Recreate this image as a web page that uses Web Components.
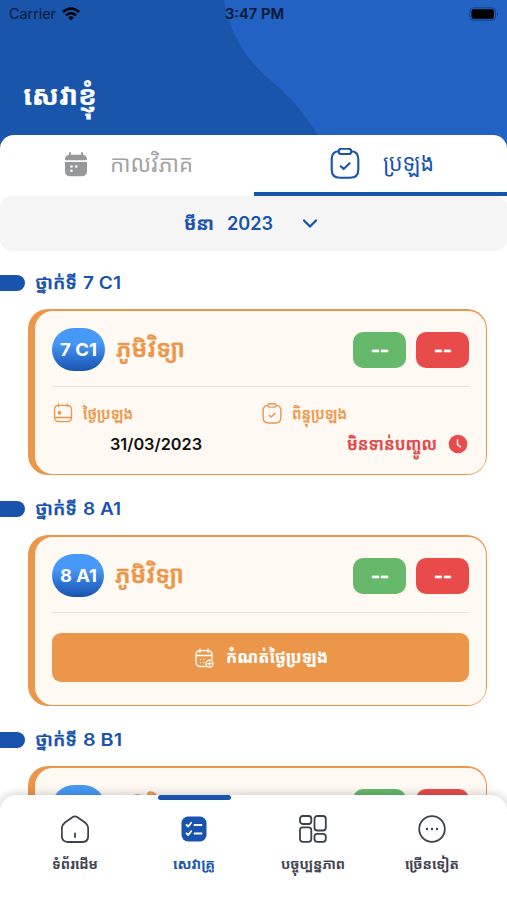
<!DOCTYPE html>
<html lang="km">
<head>
<meta charset="utf-8">
<title>សេវាខ្ញុំ</title>
<style>
html,body{margin:0;padding:0;height:100%;overflow:hidden;background:#fff}
body{font-family:Inter,"Noto Sans Khmer","Khmer OS","Noto Sans",sans-serif}
</style>
</head>
<body>
<service-app></service-app>
<script>
const ICONS = {
  calFill: '<path d="M7 2v3M19 2v3" stroke="#97989a" stroke-width="1.800"/><g fill="#97989a" stroke="none"><path d="M2 9.200V8.500q0-4.800 5-4.800h12q5 0 5 4.800v.7zM2 11h22V20q0 5.200-5 5.200H7q-5 0-5-5.200z"/></g><g fill="#fff" stroke="none"><circle cx="8.500" cy="15.500" r="1.300"/><circle cx="13.300" cy="15.500" r="1.300"/><circle cx="8.500" cy="19.800" r="1.300"/></g>',
  clip: '<path d="M8.500 3.300C4 3.700 1.700 6 1.700 11v10.500q0 8.300 8.300 8.300h10q8.300 0 8.300-8.300V11c0-5-2.300-7.300-6.800-7.700M11.300 6h7.400q2.600 0 2.600-2.600T18.700.8h-7.400Q8.700.8 8.700 3.400T11.300 6zM10.800 18.200l2.800 2.700 6-5.600"/>',
  calOut: '<path d="M5.500 1v2.600M14.500 1v2.600M6 2.300h8q4.500 0 4.500 4.500v7.400q0 4.500-4.500 4.500H6q-4.500 0-4.500-4.500V6.800Q1.500 2.300 6 2.300zM2 14.500h16"/><circle cx="6.500" cy="9.800" r="1.200" fill="currentColor"/>',
  clock: '<circle cx="10" cy="10" r="9.300" fill="#e94b4b" stroke="none"/><path d="M9.500 5.800v4.700l2.900 2.300" stroke="#fff"/>',
  calAdd: '<path d="M6 1v3.500M14 1v3.500M2 7.500h16M18 11V7q0-4.300-4.200-4.300H6.200Q2 2.700 2 7v7q0 4.500 4.200 4.500h5.300"/><circle cx="15.500" cy="15.700" r="3.500"/><path d="M15.500 14.200v3M14 15.700h3M6.500 11.500h.1M9.800 11.500h.1M6.500 14.500h.1M9.800 14.500h.1"/>',
  chev: '<path d="M2 2.500l6 6 6-6"/>',
  home: '<path d="M4 7.500L11.500 2.200q2.500-1.600 5 0L24 7.500q3.200 2.500 3.200 6v7.300q0 6.200-6.200 6.200H7q-6.200 0-6.200-6.200v-7.300q0-3.500 3.200-6zM14 18.500v3.500"/>',
  list: '<rect x="1.500" y="1.500" width="25" height="25" rx="6.500" fill="#1854ad" stroke="none"/><path d="M6.500 9.800l1.700 1.700 3-3.700M14.500 10h7M6.500 18.300L8.200 20l3-3.700M14.500 18.500h7" stroke="#fff"/>',
  grid: '<rect x="1" y="1" width="11.300" height="8" rx="2.700"/><rect x="15.500" y="1" width="11.300" height="14.500" rx="2.700"/><rect x="1" y="12.300" width="11.300" height="14.500" rx="2.700"/><rect x="15.500" y="18.800" width="11.300" height="8" rx="2.700"/>',
  more: '<circle cx="14" cy="14" r="12.800"/><g fill="currentColor" stroke="none"><circle cx="9" cy="14" r="1.200"/><circle cx="14" cy="14" r="1.200"/><circle cx="19" cy="14" r="1.200"/></g>'
};
class UiIcon extends HTMLElement {
  connectedCallback() {
    const w = this.getAttribute('w'), h = this.getAttribute('h') || w;
    const box = this.getAttribute('box') || `${w} ${h}`;
    this.attachShadow({mode:'open'}).innerHTML =
      `<style>:host{display:block;flex:none;width:${w}px;height:${h}px}svg{display:block}</style>
      <svg width="${w}" height="${h}" viewBox="0 0 ${box}" fill="none" stroke="currentColor" stroke-width="${this.getAttribute('sw')||1.5}" stroke-linecap="round" stroke-linejoin="round">${ICONS[this.getAttribute('name')]}</svg>`;
  }
}
customElements.define('ui-icon', UiIcon);

/* A single-line label whose font size (s), weight (b), outline (k) and drawn width (w) are given. */
class UiLabel extends HTMLElement {
  connectedCallback() {
    const w = this.getAttribute('w');
    this.attachShadow({mode:'open'}).innerHTML =
      `<style>:host{display:block;flex:none;white-space:nowrap;line-height:1;height:1em;font-size:${this.getAttribute('s')}px;font-weight:${this.getAttribute('b')||400};-webkit-text-stroke:${this.getAttribute('k')||0}px currentColor;${w?`width:${w}px`:''}}
      span{display:inline-block;transform-origin:0 50%;line-height:1em}</style><span><slot></slot></span>`;
    if (w) {
      const s = this.shadowRoot.querySelector('span');
      s.style.transform = `scaleX(${+w / s.getBoundingClientRect().width})`;
    }
  }
}

const define = (name, html) => customElements.define(name, class extends HTMLElement {
  connectedCallback() {
    if (this.shadowRoot) return;
    const t = document.createElement('template');
    t.innerHTML = html(this);
    this.attachShadow({mode:'open'}).append(t.content.cloneNode(true));
  }
});

define('app-header', () => `<style>
:host{display:block;position:relative;height:149px;background:#1955aa;color:#fff}
.bg{position:absolute;inset:0}
.bar{position:relative;display:grid;grid-template-columns:1fr auto 1fr;align-items:center;height:28px;padding:0 8px 0 9px;color:#071733}
.l{display:flex;align-items:center;gap:6px}.r{justify-self:end}
.title{position:relative;padding:54px 0 0 23px}
</style>
<svg class="bg" width="507" height="149"><path d="M224 0C230 34 244 57 270 80C292 97 306 117 318 135L326 149H507V0z" fill="#2262c2"/></svg>
<div class="bar"><div class="l"><ui-label s="14" w="47">Carrier</ui-label>
<svg width="18" height="14" viewBox="0 0 18 14" fill="none" stroke="#000" stroke-width="2.400"><path d="M1 5q8-7 16 0M4 8.400q5-4.300 10 0"/><path d="M6.200 10.500q2.800-2.300 5.600 0L9 13.500z" fill="#000" stroke="none"/></svg></div>
<ui-label s="14" b="600" w="59">3:47 PM</ui-label>
<svg class="r" width="30" height="14" viewBox="0 0 30 14"><rect x="1" y=".8" width="25.500" height="12.400" rx="3.500" fill="none" stroke="#163f7f" stroke-width="1"/><rect x="2.500" y="2.300" width="22.500" height="9.400" rx="2.200"/><path d="M28 5q2 2 0 4z" fill="#163f7f"/></svg></div>
<div class="title"><ui-label s="27" b="700" k=".2" w="74">សេវាខ្ញុំ</ui-label></div>`);

define('tab-bar', () => `<style>
:host{display:grid;grid-template-columns:254px 253px;position:relative;height:61px;margin-top:-14px;background:#fff;border-radius:14px 14px 0 0}
div{display:flex;align-items:center;box-sizing:border-box;padding-bottom:3px}
.a{color:#a3a3a3;padding-left:63px;gap:20px}
.b{color:#1854ad;padding-left:76px;gap:23px;border-bottom:4px solid #1854ad;padding-bottom:0}
</style><div class="a"><ui-icon name="calFill" w="27"></ui-icon><ui-label s="23" w="83">កាលវិភាគ</ui-label></div>
<div class="b"><ui-icon name="clip" w="30" h="32" sw="2.100"></ui-icon><ui-label s="23" w="51">ប្រឡង</ui-label></div>`);

define('month-picker', () => `<style>
:host{display:flex;align-items:center;height:55px;background:#f5f5f5;border-radius:12px;color:#1854ad;padding-left:184px}
.y{margin-left:13px}.c{margin-left:29px}
</style><ui-label s="18" b="700" k=".2" w="30">មីនា</ui-label><ui-label class="y" s="18" b="600" w="46">2023</ui-label><ui-icon class="c" name="chev" w="16" h="11" sw="2.300"></ui-icon>`);

define('class-section', el => `<style>
:host{display:block;padding-top:16px;margin-bottom:2px}
.h{display:flex;align-items:center;height:32px;gap:10px;color:#1854ad}
.pill{width:25px;height:16px;border-radius:0 8px 8px 0;background:#1854ad}
.t{display:flex;align-items:center;gap:6px}
</style><div class="h"><div class="pill"></div><div class="t"><ui-label s="18" b="600" k=".3" w="42">ថ្នាក់ទី</ui-label><ui-label s="17.500" b="600" w="${el.getAttribute('tw')}">${el.getAttribute('code')}</ui-label></div></div><slot></slot>`);

define('score-chip', () => `<style>:host{display:flex;align-items:center;justify-content:center;width:53px;height:36px;border-radius:10px;color:#fff;background:var(--chip)}
</style><ui-label s="18" b="700" k=".4" w="18">--</ui-label>`);

define('exam-card', el => `<style>
:host{display:block;box-sizing:border-box;width:459px;height:${el.getAttribute('h')}px;margin:10px 0 0 28px;padding:1.500px 1.500px 1.500px 7px;border-radius:20px;background:#eb9649}
.in{height:100%;box-sizing:border-box;border-radius:18px;background:#fef9f3;padding:17.500px 16.500px 0 17px}
.h{display:flex;align-items:center;height:43px;padding-bottom:15px;border-bottom:1px solid #e5e4e3}
.badge{display:flex;justify-content:center;align-items:center;width:${el.getAttribute('bw')}px;height:43px;border-radius:22px;color:#fff;background:linear-gradient(#4799f7 0 35%,#3077d6 65%,#1854ad)}
.n{margin-left:11px;margin-top:-2px;color:#eb9649;flex:1!important}
score-chip{margin-left:10px}
</style><div class="in"><div class="h"><div class="badge"><ui-label s="18" b="700" w="37">${el.getAttribute('code')}</ui-label></div><ui-label class="n" s="24.500" b="600" k=".4" w="69">ភូមិវិទ្យា</ui-label>
<score-chip style="--chip:#66b96b"></score-chip><score-chip style="--chip:#e94b4b"></score-chip></div><slot></slot></div>`);

define('exam-details', () => `<style>
:host{display:grid;grid-template-columns:209px 1fr;grid-template-rows:26px 26px;row-gap:5px;padding-top:13px}
div{display:flex;align-items:center}.o{color:#eb9649;gap:10px;padding-left:1px}
.d{padding-left:58px;color:#111}.r{justify-content:flex-end;gap:11px;color:#e04848;padding-right:1px}
</style><div class="o"><ui-icon name="calOut" w="20" sw="1.300"></ui-icon><ui-label s="15" b="500" k=".3" w="50">ថ្ងៃប្រឡង</ui-label></div>
<div class="o"><ui-icon name="clip" w="20" h="21" box="30 31" sw="2.100"></ui-icon><ui-label s="15" b="500" k=".3" w="55">ពិន្ទុប្រឡង</ui-label></div>
<div class="d"><ui-label s="16" b="600" w="92">31/03/2023</ui-label></div>
<div class="r"><ui-label s="17" b="600" k=".3" w="90">មិនទាន់បញ្ចូល</ui-label><ui-icon name="clock" w="20"></ui-icon></div>`);

define('set-date-button', () => `<style>
:host{display:flex;align-items:center;justify-content:center;height:49px;margin-top:20px;border-radius:9px;background:#eb9649;color:#fff;gap:12px}
</style><ui-icon name="calAdd" w="20" sw="1.300"></ui-icon><ui-label s="17" b="700" k=".2" w="102">កំណត់ថ្ងៃប្រឡង</ui-label>`);

define('nav-item', el => `<style>
:host{display:flex;flex-direction:column;align-items:center;position:relative;padding-top:20px;gap:14px;color:#3d404d}
:host([active]){color:#1854ad}
:host([active])::before{content:"";position:absolute;top:0;left:23px;width:73px;height:5px;border-radius:3px;background:#1854ad}
</style><ui-icon name="${el.getAttribute('icon')}" w="28" sw="1.800"></ui-icon><ui-label s="14" b="600" k=".2" w="${el.getAttribute('lw')}"><slot></slot></ui-label>`);

define('bottom-nav', () => `<style>
:host{position:absolute;left:0;right:0;bottom:0;box-sizing:border-box;display:grid;grid-template-columns:repeat(4,119px);height:105px;padding-left:15.500px;background:#fff;border-radius:16px 16px 0 0;box-shadow:0 -1px 10px #0003}
</style><nav-item icon="home" lw="46">ទំព័រដើម</nav-item><nav-item active icon="list" lw="42">សេវាគ្រូ</nav-item><nav-item icon="grid" lw="64">បច្ចុប្បន្នភាព</nav-item><nav-item icon="more" lw="54">ច្រើនទៀត</nav-item>`);

define('service-app', () => `<style>:host{display:block;position:relative;width:507px;height:900px;overflow:hidden;background:#fff}</style>
<app-header></app-header><tab-bar></tab-bar><month-picker></month-picker>
<class-section code="7 C1" tw="38"><exam-card code="7 C1" bw="53" h="166"><exam-details></exam-details></exam-card></class-section>
<class-section code="8 A1" tw="38"><exam-card code="8 A1" bw="52" h="171"><set-date-button></set-date-button></exam-card></class-section>
<class-section code="8 B1" tw="39"><exam-card code="8 B1" bw="53" h="171"><set-date-button></set-date-button></exam-card></class-section>
<bottom-nav></bottom-nav>`);

customElements.define('ui-label', UiLabel);
</script>
</body>
</html>
